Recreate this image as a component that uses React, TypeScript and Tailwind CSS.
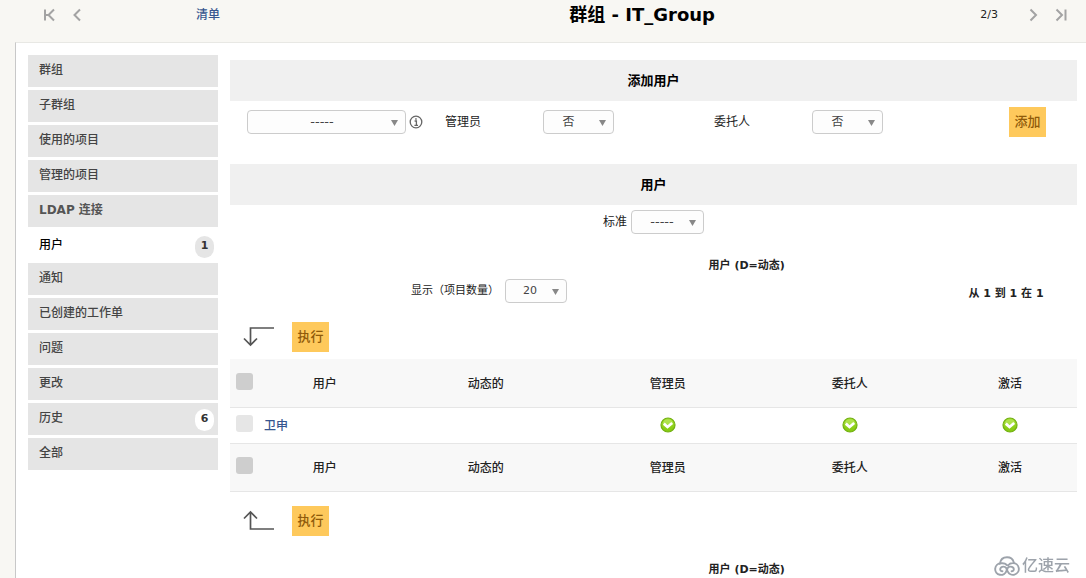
import React from 'react';

interface MenuItem {
  label: string;
  count?: number;
  active?: boolean;
}

const menu: MenuItem[] = [
  { label: '群组' },
  { label: '子群组' },
  { label: '使用的项目' },
  { label: '管理的项目' },
  { label: 'LDAP 连接' },
  { label: '用户', count: 1, active: true },
  { label: '通知' },
  { label: '已创建的工作单' },
  { label: '问题' },
  { label: '更改' },
  { label: '历史', count: 6 },
  { label: '全部' },
];

const columns = ['用户', '动态的', '管理员', '委托人', '激活'];

const NavButton: React.FC<{ label: string; path: string }> = ({ label, path }) => (
  <button type="button" aria-label={label} className="flex w-7 justify-center text-[#a3a3a3]">
    <svg width="14" height="14" viewBox="0 0 14 14" fill="none" stroke="currentColor" strokeWidth="2">
      <path d={path} />
    </svg>
  </button>
);

interface SelectProps {
  id: string;
  options: string[];
  className: string;
  label?: string;
}

const Select: React.FC<SelectProps> = ({ id, options, className, label }) => (
  <span className="relative inline-flex">
    <select
      id={id}
      aria-label={label}
      className={`appearance-none rounded border border-[#ccc] bg-[#fdfdfd] text-[#444] [text-align-last:center] ${className}`}
    >
      {options.map((o) => (
        <option key={o}>{o}</option>
      ))}
    </select>
    <svg className="pointer-events-none absolute right-2 top-[10px]" width="7" height="6" viewBox="0 0 7 6" fill="#888">
      <path d="M0 0h7L3.5 6z" />
    </svg>
  </span>
);

const ActionButton: React.FC<{ children: React.ReactNode }> = ({ children }) => (
  <button type="button" className="h-[30px] w-[37px] bg-[#fec95c] text-[13px] font-medium text-[#8f5a0a]">
    {children}
  </button>
);

const SectionTitle: React.FC<{ children: React.ReactNode }> = ({ children }) => (
  <h2 className="bg-[#f0f0f0] text-center text-[13px] leading-[41px] font-bold text-black">{children}</h2>
);

const Caption = () => <p className="ml-auto w-[78%] text-center text-[11px] leading-4 font-bold">用户 (D=动态)</p>;

const MassiveAction: React.FC<{ up?: boolean }> = ({ up }) => (
  <div className="flex items-center gap-[18px] pl-[13px]">
    <svg width="31" height="22" viewBox="0 0 31 22" fill="none" stroke="#555" strokeWidth="1.7">
      {up ? <path d="M1 8.5 7.5 2l6.5 6.5M7.5 2v17H31" /> : <path d="M1 12.5 7.5 19l6.5-6.5M7.5 19V2H31" />}
    </svg>
    <ActionButton>执行</ActionButton>
  </div>
);

const Check: React.FC<{ label: string }> = ({ label }) => (
  <svg className="mx-auto" width="16" height="16" viewBox="0 0 16 16" role="img" aria-label={label}>
    <defs>
      <linearGradient id="green" x1="0" y1="0" x2="0" y2="1">
        <stop offset="0" stopColor="#9fdc2c" />
        <stop offset="1" stopColor="#84c90f" />
      </linearGradient>
    </defs>
    <circle cx="8" cy="8" r="7" fill="url(#green)" stroke="#72b012" strokeWidth="1.2" />
    <path d="M2.6 6.8a5.5 5.5 0 0 1 10.8 0Q8 8.5 2.6 6.800z" fill="#c4ee72" opacity=".5" />
    <path d="M3.8 6.600 7.500 10 12.200 6" fill="none" stroke="#fff" strokeWidth="2.800" />
  </svg>
);

const CheckBox: React.FC<{ label: string; light?: boolean }> = ({ label, light }) => (
  <input
    type="checkbox"
    aria-label={label}
    className={`mb-[3px] ml-[6px] block size-[17px] appearance-none rounded-[3px] ${light ? 'bg-[#e6e6e6]' : 'bg-[#cecece]'}`}
  />
);

const HeaderRow = () => (
  <tr className="h-12 border-b border-[#e6e6e6] bg-[#f8f8f8]">
    <th>
      <CheckBox label="全部" />
    </th>
    {columns.map((c) => (
      <th key={c} className="pt-[2px] font-medium">
        {c}
      </th>
    ))}
  </tr>
);

export default function App() {
  return (
    <div className="flex min-h-screen flex-col bg-[#f8f7f3] font-['DejaVu_Sans','Noto_Sans_CJK_SC',sans-serif] text-xs text-[#222]">
      <header className="flex h-[42px] items-start pt-[3px] pr-[11px] pl-[35px] leading-6">
        <nav className="flex h-6 items-center">
          <NavButton label="首页" path="M3 1.5v11M12 1.5 6.5 7l5.5 5.5M4 7h3" />
          <NavButton label="上一页" path="M10 1.5 4.5 7l5.5 5.5" />
        </nav>
        <div className="ml-[21px] w-48 text-center">
          <a href="#list" className="font-medium text-[#36558f]">清单</a>
        </div>
        <h1 className="flex-1 text-center text-lg leading-6 font-bold text-black">群组 - IT_Group</h1>
        <span className="text-[11px] leading-6">2/3</span>
        <nav className="ml-[21px] flex h-6 items-center">
          <NavButton label="下一页" path="M4.5 1.5 10 7l-5.5 5.5" />
          <NavButton label="末页" path="M11.5 1.5v11M2.5 1.5 8 7l-5.5 5.5" />
        </nav>
      </header>

      <main className="ml-[15px] flex flex-1 items-start gap-3 border-t border-l border-t-[#e8e8e4] border-l-[#c8c8c8] bg-white pr-[9px] pl-3">
        <aside className="w-[190px] shrink-0 pt-3">
          <ul className="flex flex-col gap-[3px]">
            {menu.map((item) => (
              <li key={item.label}>
                <a
                  href="#tab"
                  className={`flex items-start justify-between pt-[6px] pr-1 pl-[11px] font-medium ${
                    item.active ? 'h-[30px] text-black' : 'h-8 bg-[#e5e5e5] text-[#444]'
                  }`}
                >
                  <span className={`leading-[18px] ${item.label.startsWith('LDAP') ? 'font-bold text-[#555]' : ''}`}>
                    {item.label}
                  </span>
                  {item.count && (
                    <span
                      className={`h-[22px] w-[19px] rounded-full text-center text-[11px] leading-5 font-bold text-[#333] ${
                        item.active ? 'bg-[#e5e5e5]' : 'bg-white'
                      }`}
                    >
                      {item.count}
                    </span>
                  )}
                </a>
              </li>
            ))}
          </ul>
        </aside>

        <div className="min-w-0 flex-1 pt-[17px]">
          <SectionTitle>添加用户</SectionTitle>
          <form className="grid h-[63px] grid-cols-[215fr_98fr_171fr_98fr_197fr_68fr] items-start pt-[6px]">
            <div className="flex h-[30px] items-center gap-[3px] pl-[17px]">
              <Select id="user" label="用户" options={['-----']} className="h-6 w-[159px] pr-[9px] text-[13px]" />
              <svg width="14" height="14" viewBox="0 0 14 14" fill="none" stroke="#666" strokeWidth="1.3">
                <circle cx="7" cy="7" r="5.8" />
                <path d="M5.6 6h1.8v4.2M5.4 10.300h3.600" />
                <path d="M6.200 3.900h1.500" strokeWidth="1.500" />
              </svg>
            </div>
            <label htmlFor="manager" className="leading-[30px]">管理员</label>
            <div className="flex h-[30px] items-center">
              <Select id="manager" options={['否', '是']} className="h-6 w-[71px] pr-5 text-xs" />
            </div>
            <label htmlFor="delegatee" className="leading-[30px]">委托人</label>
            <div className="flex h-[30px] items-center">
              <Select id="delegatee" options={['否', '是']} className="h-6 w-[71px] pr-5 text-xs" />
            </div>
            <div>
              <ActionButton>添加</ActionButton>
            </div>
          </form>

          <SectionTitle>用户</SectionTitle>
          <div className="flex items-center justify-center gap-1 pt-[5px]">
            <label htmlFor="criterion">标准</label>
            <Select id="criterion" options={['-----']} className="h-6 w-[73px] pr-[11px] text-[13px]" />
          </div>

          <div className="pt-6">
            <Caption />
          </div>
          <div className="grid grid-cols-[518fr_187fr_142fr] items-center pt-[5px] text-[11px]">
            <div className="flex items-center justify-center gap-[6px]">
              <label htmlFor="limit">显示（项目数量）</label>
              <Select id="limit" options={['20', '50', '100']} className="h-6 w-[62px] pr-3 text-[11px]" />
            </div>
            <p className="col-start-3 pt-[7px] text-center font-bold">从 1 到 1 在 1</p>
          </div>

          <div className="pt-[19px] pb-[7px]">
            <MassiveAction />
          </div>
          <table className="w-full table-fixed border-collapse">
            <colgroup>
              <col className="w-[27px]" />
              <col className="w-[16%]" />
              <col className="w-[22%]" />
              <col className="w-[21%]" />
              <col className="w-[22%]" />
              <col />
            </colgroup>
            <thead>
              <HeaderRow />
            </thead>
            <tbody>
              <tr className="h-9 border-b border-[#e6e6e6]">
                <td>
                  <CheckBox label="卫申" light />
                </td>
                <td className="pt-px pl-[7px]">
                  <a href="#user" className="font-medium text-[#36558f]">卫申</a>
                </td>
                <td />
                <td><Check label="是" /></td>
                <td><Check label="是" /></td>
                <td><Check label="是" /></td>
              </tr>
            </tbody>
            <tfoot>
              <HeaderRow />
            </tfoot>
          </table>
          <div className="pt-[14px]">
            <MassiveAction up />
          </div>
          <div className="pt-[26px]">
            <Caption />
          </div>
        </div>
      </main>

      <div className="fixed right-4 bottom-0 flex h-6 items-center gap-[2px] text-[16px] leading-6 font-medium text-[#9da3ab]">
        <svg width="26" height="20" viewBox="0 0 26 20" fill="none" stroke="currentColor" strokeWidth="1.9" strokeLinecap="round">
          <path d="M5.800 7.800C6.400 3.800 9.300 1.200 13 1.200c3.400 0 6 1.900 6.800 5.200" />
          <path d="M12.800 9C10.600 6.600 8.400 7.200 6.800 7.300a5.800 5.800 0 1 0 5.700 7.600c.8-2.500-.8-4.300-3-4.300-2.100 0-3.300 1.300-3.300 2.700 0 1.300 1 2 2.200 1.900" />
          <path d="M14 9.500c1.300-1.800 3-2.500 4.800-2.500a5.900 5.900 0 1 1-5.300 8.200c-1-2.500.6-4.600 2.900-4.600 2.100 0 3.400 1.300 3.400 2.700 0 1.300-1 2-2.200 1.900" />
        </svg>
        亿速云
      </div>
    </div>
  );
}
